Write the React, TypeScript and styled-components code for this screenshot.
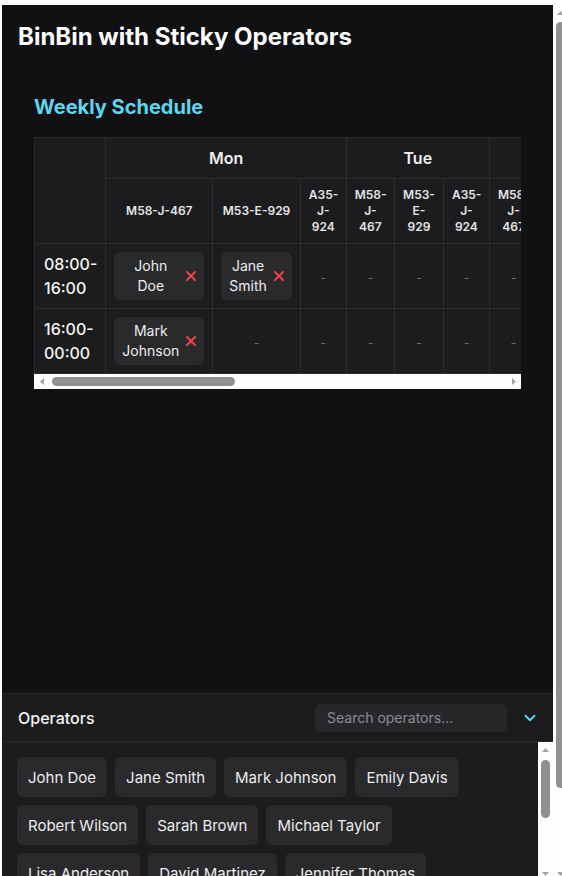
import React from "react";
import styled, { createGlobalStyle } from "styled-components";
import { X, ChevronDown } from "lucide-react";

const GlobalStyle = createGlobalStyle`
  html, body {
    margin: 0;
    padding: 0;
    overflow: hidden;
    background: #ffffff;
    font-family: Inter, "Noto Sans", sans-serif;
  }
  * { box-sizing: border-box; }
`;

/* ---------- scrollbar look-alikes (drawn, since the browser hides them) ---------- */

const VRail = styled.div`
  flex: none;
  width: 15px;
  display: flex;
  flex-direction: column;
  background: #fdfdfd;
`;

const HRail = styled.div`
  flex: none;
  height: 15px;
  display: flex;
  flex-direction: row;
  background: #fdfdfd;
`;

const ArrowBox = styled.div`
  flex: none;
  width: 15px;
  height: 15px;
  display: flex;
  align-items: center;
  justify-content: center;
  color: #a3a3a3;
`;

const VTrack = styled.div<{ $offset: number }>`
  flex: 1;
  min-height: 0;
  display: flex;
  flex-direction: column;
  align-items: center;
  padding-top: ${(p) => p.$offset}px;
  overflow: hidden;
`;

const HTrack = styled.div<{ $offset: number }>`
  flex: 1;
  min-width: 0;
  display: flex;
  flex-direction: row;
  align-items: center;
  padding-left: ${(p) => p.$offset}px;
  overflow: hidden;
`;

const VThumb = styled.div<{ $size: number }>`
  flex: none;
  width: 9px;
  height: ${(p) => p.$size}px;
  border-radius: 5px;
  background: #909090;
`;

const HThumb = styled.div<{ $size: number }>`
  flex: none;
  height: 9px;
  width: ${(p) => p.$size}px;
  border-radius: 5px;
  background: #909090;
`;

type Dir = "up" | "down" | "left" | "right";
const arrowPoints: Record<Dir, string> = {
  up: "0,4 3.5,0 7,4",
  down: "0,0 7,0 3.5,4",
  left: "4,0 4,7 0,3.5",
  right: "0,0 0,7 4,3.5",
};

function Arrow({ dir }: { dir: Dir }) {
  const vertical = dir === "up" || dir === "down";
  return (
    <ArrowBox>
      <svg
        width={vertical ? 7 : 4}
        height={vertical ? 4 : 7}
        viewBox={vertical ? "0 0 7 4" : "0 0 4 7"}
      >
        <polygon points={arrowPoints[dir]} fill="currentColor" />
      </svg>
    </ArrowBox>
  );
}

function VScrollbar({ offset, size }: { offset: number; size: number }) {
  return (
    <VRail>
      <Arrow dir="up" />
      <VTrack $offset={offset}>
        <VThumb $size={size} />
      </VTrack>
      <Arrow dir="down" />
    </VRail>
  );
}

function HScrollbar({ offset, size }: { offset: number; size: number }) {
  return (
    <HRail>
      <Arrow dir="left" />
      <HTrack $offset={offset}>
        <HThumb $size={size} />
      </HTrack>
      <Arrow dir="right" />
    </HRail>
  );
}

/* ---------- page ---------- */

const Viewport = styled.div`
  margin: 5px 0 0 2px;
  width: 566px;
  height: 876px;
  display: flex;
  flex-direction: row;
  background: #ffffff;
`;

const Page = styled.div`
  flex: 1;
  min-width: 0;
  background: #111113;
  color: #f4f4f5;
  display: flex;
  flex-direction: column;
  overflow: hidden;
`;

const Header = styled.header`
  padding: 16px 16px 14px;
`;

const Title = styled.h1`
  margin: 0;
  font-size: 24px;
  line-height: 32px;
  font-weight: 700;
  color: #ffffff;
`;

const Main = styled.main`
  flex: 1;
  min-height: 0;
  padding: 16px;
  overflow: hidden;
`;

const Card = styled.section`
  padding: 12px 16px 16px;
`;

const SectionTitle = styled.h2`
  margin: 0 0 18px;
  font-size: 20px;
  line-height: 24px;
  font-weight: 700;
  color: #5ed6f0;
`;

const TableFrame = styled.div`
  display: flex;
  flex-direction: column;
`;

const TableClip = styled.div`
  overflow: hidden;
`;

const Table = styled.table`
  border-collapse: collapse;
  background: #1c1c1f;
`;

const DayHead = styled.th`
  border: 1px solid #2c2c30;
  padding: 10px 8px;
  font-size: 16px;
  line-height: 20px;
  font-weight: 600;
  color: #ececee;
  text-align: center;
`;

const CornerHead = styled.th`
  border: 1px solid #2c2c30;
  padding: 8px;
`;

const MachineHead = styled.th`
  border: 1px solid #2c2c30;
  padding: 8px;
  font-size: 12px;
  line-height: 16px;
  font-weight: 600;
  color: #e4e4e7;
  text-align: center;
`;

const TimeCell = styled.td`
  border: 1px solid #2c2c30;
  padding: 8px 8px 8px 9px;
  font-size: 16px;
  line-height: 24px;
  font-weight: 500;
  color: #f4f4f5;
  text-align: left;
`;

const SlotCell = styled.td`
  border: 1px solid #2c2c30;
  padding: 8px;
  text-align: center;
  vertical-align: middle;
`;

const Empty = styled.span`
  font-size: 12px;
  color: #6b6b73;
`;

const Assignment = styled.div`
  display: flex;
  align-items: center;
  gap: 4px;
  padding: 4px 5px 4px 8px;
  background: #2a2a2d;
  border-radius: 6px;
`;

const AssignName = styled.span`
  flex: 1;
  font-size: 14px;
  line-height: 20px;
  color: #ececee;
  text-align: center;
`;

const RemoveButton = styled.button`
  display: flex;
  align-items: center;
  justify-content: center;
  border: none;
  background: transparent;
  padding: 0;
  color: #ef4444;
  cursor: pointer;
`;

const Operators = styled.section`
  flex: none;
  background: #1c1c1f;
  border-top: 1px solid #2a2a2e;
`;

const OperatorsBar = styled.div`
  display: flex;
  align-items: center;
  justify-content: space-between;
  height: 48px;
  padding: 0 12px 0 16px;
  border-bottom: 1px solid #2a2a2e;
`;

const OperatorsLabel = styled.h3`
  margin: 0;
  font-size: 16px;
  font-weight: 500;
  color: #f4f4f5;
`;

const BarTools = styled.div`
  display: flex;
  align-items: center;
  gap: 12px;
`;

const Search = styled.input`
  width: 192px;
  height: 28px;
  border: none;
  border-radius: 6px;
  background: #27272a;
  padding: 0 12px;
  font-family: Inter, "Noto Sans", sans-serif;
  font-size: 14px;
  color: #f4f4f5;
  outline: none;
  &::placeholder {
    color: #8b8b93;
  }
`;

const ToggleButton = styled.button`
  display: flex;
  align-items: center;
  justify-content: center;
  border: none;
  background: transparent;
  padding: 2px;
  color: #5ed6f0;
  cursor: pointer;
`;

const ListArea = styled.div`
  height: 139px;
  display: flex;
  flex-direction: row;
`;

const OperatorList = styled.div`
  flex: 1;
  min-width: 0;
  overflow: hidden;
  padding: 15px 16px 16px 15px;
  display: flex;
  flex-wrap: wrap;
  align-content: flex-start;
  gap: 8px;
`;

const OperatorChip = styled.div`
  height: 40px;
  display: flex;
  align-items: center;
  padding: 0 11px;
  background: #2a2a2d;
  border-radius: 6px;
  font-size: 15px;
  color: #ececee;
  white-space: nowrap;
`;

const days = ["Mon", "Tue", "Wed", "Thu", "Fri", "Sat", "Sun"];
const machines = ["M58-J-467", "M53-E-929", "A35-J-924"];
const shifts = ["08:00-16:00", "16:00-00:00"];

const assignments: Record<string, string> = {
  "Mon|M58-J-467|08:00-16:00": "John Doe",
  "Mon|M53-E-929|08:00-16:00": "Jane Smith",
  "Mon|M58-J-467|16:00-00:00": "Mark Johnson",
};

const operators = [
  "John Doe",
  "Jane Smith",
  "Mark Johnson",
  "Emily Davis",
  "Robert Wilson",
  "Sarah Brown",
  "Michael Taylor",
  "Lisa Anderson",
  "David Martinez",
  "Jennifer Thomas",
  "James Moore",
  "Patricia Jackson",
  "Daniel White",
  "Linda Harris",
  "Matthew Clark",
  "Susan Lewis",
];

export default function App() {
  return (
    <>
      <GlobalStyle />
      <Viewport>
        <Page>
          <Header>
            <Title>BinBin with Sticky Operators</Title>
          </Header>
          <Main>
            <Card>
              <SectionTitle>Weekly Schedule</SectionTitle>
              <TableFrame>
                <TableClip>
                  <Table>
                    <thead>
                      <tr>
                        <CornerHead rowSpan={2} />
                        {days.map((d) => (
                          <DayHead key={d} colSpan={machines.length}>
                            {d}
                          </DayHead>
                        ))}
                      </tr>
                      <tr>
                        {days.map((d) =>
                          machines.map((m) => (
                            <MachineHead key={d + m}>{m}</MachineHead>
                          ))
                        )}
                      </tr>
                    </thead>
                    <tbody>
                      {shifts.map((s) => (
                        <tr key={s}>
                          <TimeCell>{s.replace("-", "-\u200B")}</TimeCell>
                          {days.map((d) =>
                            machines.map((m) => {
                              const name = assignments[`${d}|${m}|${s}`];
                              return (
                                <SlotCell key={d + m}>
                                  {name ? (
                                    <Assignment>
                                      <AssignName>{name}</AssignName>
                                      <RemoveButton aria-label="Remove">
                                        <X size={16} strokeWidth={3} />
                                      </RemoveButton>
                                    </Assignment>
                                  ) : (
                                    <Empty>-</Empty>
                                  )}
                                </SlotCell>
                              );
                            })
                          )}
                        </tr>
                      ))}
                    </tbody>
                  </Table>
                </TableClip>
                <HScrollbar offset={3} size={183} />
              </TableFrame>
            </Card>
          </Main>
          <Operators>
            <OperatorsBar>
              <OperatorsLabel>Operators</OperatorsLabel>
              <BarTools>
                <Search placeholder="Search operators..." />
                <ToggleButton aria-label="Collapse">
                  <ChevronDown size={18} strokeWidth={2.5} />
                </ToggleButton>
              </BarTools>
            </OperatorsBar>
            <ListArea>
              <OperatorList>
                {operators.map((o) => (
                  <OperatorChip key={o}>{o}</OperatorChip>
                ))}
              </OperatorList>
              <VScrollbar offset={3} size={58} />
            </ListArea>
          </Operators>
        </Page>
        <VScrollbar offset={2} size={766} />
      </Viewport>
    </>
  );
}
